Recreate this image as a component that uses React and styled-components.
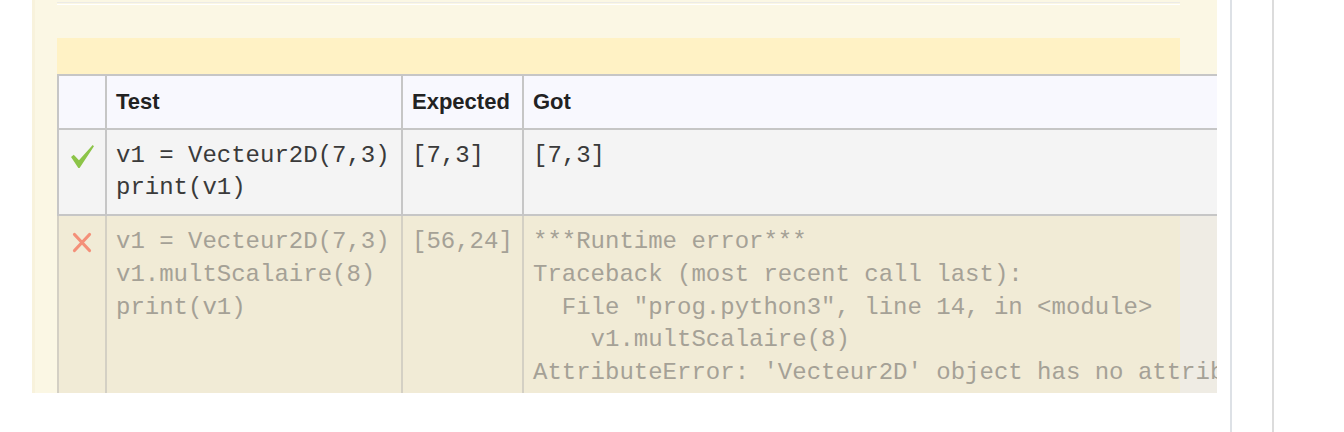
import React from "react";
import styled, { createGlobalStyle } from "styled-components";

const Global = createGlobalStyle`
  html, body { margin: 0; padding: 0; background: #ffffff; }
  body { font-family: "Liberation Sans", Arial, sans-serif; }
`;

const Page = styled.div`
  display: flex;
  align-items: flex-start;
  height: 432px;
  overflow: hidden;
`;

const Panel = styled.div`
  margin-left: 32px;
  width: 1185px;
  height: 393px;
  box-sizing: border-box;
  padding: 2px 37px 0 22px;
  background: #fbf7e4;
  border-left: 3px solid #f8f2dc;
  overflow: hidden;
  flex-shrink: 0;
`;

const Rule = styled.div`
  height: 1px;
  border-top: 1px solid #ecebe6;
  border-bottom: 1px solid #ffffff;
`;

const Band = styled.div`
  margin-top: 33px;
  height: 36px;
  background: #fff2c5;
`;

const Table = styled.table`
  border-collapse: collapse;
  table-layout: fixed;
  width: 1162px;
`;

const HeadCell = styled.th`
  border: 2px solid #c6c6c6;
  background: #f8f8fe;
  text-align: left;
  font-family: "Liberation Sans", Arial, sans-serif;
  font-weight: bold;
  font-size: 22px;
  line-height: 32px;
  color: #222222;
  padding: 10px 9px;
  white-space: nowrap;
`;

const Cell = styled.td`
  border: 2px solid ${(p) => (p.$fail ? "#d4d0c4" : "#c6c6c6")};
  border-top-color: #c6c6c6;
  background: ${(p) =>
    p.$fail
      ? p.$edge
        ? "linear-gradient(to right, #f1ebd6 calc(100% - 37px), #efece4 0)"
        : "#f1ebd6"
      : "#f4f4f4"};
  vertical-align: top;
  padding: 10px 9px;
  font-family: "Liberation Mono", "Courier New", monospace;
  font-size: 24px;
  line-height: ${(p) => (p.$fail ? "32.75px" : "32px")};
  color: ${(p) => (p.$fail ? "#a5a196" : "#3a3a3a")};
  white-space: pre;
  overflow: visible;
  height: ${(p) => (p.$fail ? "200px" : "auto")};
`;

const IconCell = styled(Cell)`
  text-align: center;
  padding: 10px 0;
`;

const IconBox = styled.div`
  height: 32px;
  display: flex;
  align-items: center;
  justify-content: center;
`;

const Side = styled.div`
  margin-left: 13px;
  width: 40px;
  height: 432px;
  border-left: 2px solid #dde1e6;
  border-right: 2px solid #dcdcdc;
  flex-shrink: 0;
`;

const Check = () => (
  <svg width="25" height="25" viewBox="0 0 24 24">
    <path d="M1 12.5 L3.6 10.2 L8.6 15.6 L21.8 1 L23 2.2 L9.2 23 L8 23 Z" fill="#8cc448" />
  </svg>
);

const Cross = () => (
  <svg width="20" height="21" viewBox="0 0 20 21">
    <path d="M2.5 2.5 L17.5 18.5 M17.5 2.5 L2.5 18.5" stroke="#f49079" strokeWidth="3.2" strokeLinecap="round" />
  </svg>
);

export default function App() {
  return (
    <>
      <Global />
      <Page>
        <Panel>
          <Rule />
          <Band />
          <Table>
            <colgroup>
              <col style={{ width: 48 }} />
              <col style={{ width: 296 }} />
              <col style={{ width: 121 }} />
              <col />
            </colgroup>
            <thead>
              <tr>
                <HeadCell />
                <HeadCell>Test</HeadCell>
                <HeadCell>Expected</HeadCell>
                <HeadCell>Got</HeadCell>
              </tr>
            </thead>
            <tbody>
              <tr>
                <IconCell>
                  <IconBox>
                    <Check />
                  </IconBox>
                </IconCell>
                <Cell>{"v1 = Vecteur2D(7,3)\nprint(v1)"}</Cell>
                <Cell>{"[7,3]"}</Cell>
                <Cell>{"[7,3]"}</Cell>
              </tr>
              <tr>
                <IconCell $fail>
                  <IconBox>
                    <Cross />
                  </IconBox>
                </IconCell>
                <Cell $fail>{"v1 = Vecteur2D(7,3)\nv1.multScalaire(8)\nprint(v1)"}</Cell>
                <Cell $fail>{"[56,24]"}</Cell>
                <Cell $fail $edge>
                  {"***Runtime error***\nTraceback (most recent call last):\n  File \"prog.python3\", line 14, in <module>\n    v1.multScalaire(8)\nAttributeError: 'Vecteur2D' object has no attribute 'multScalaire'"}
                </Cell>
              </tr>
            </tbody>
          </Table>
        </Panel>
        <Side />
      </Page>
    </>
  );
}
